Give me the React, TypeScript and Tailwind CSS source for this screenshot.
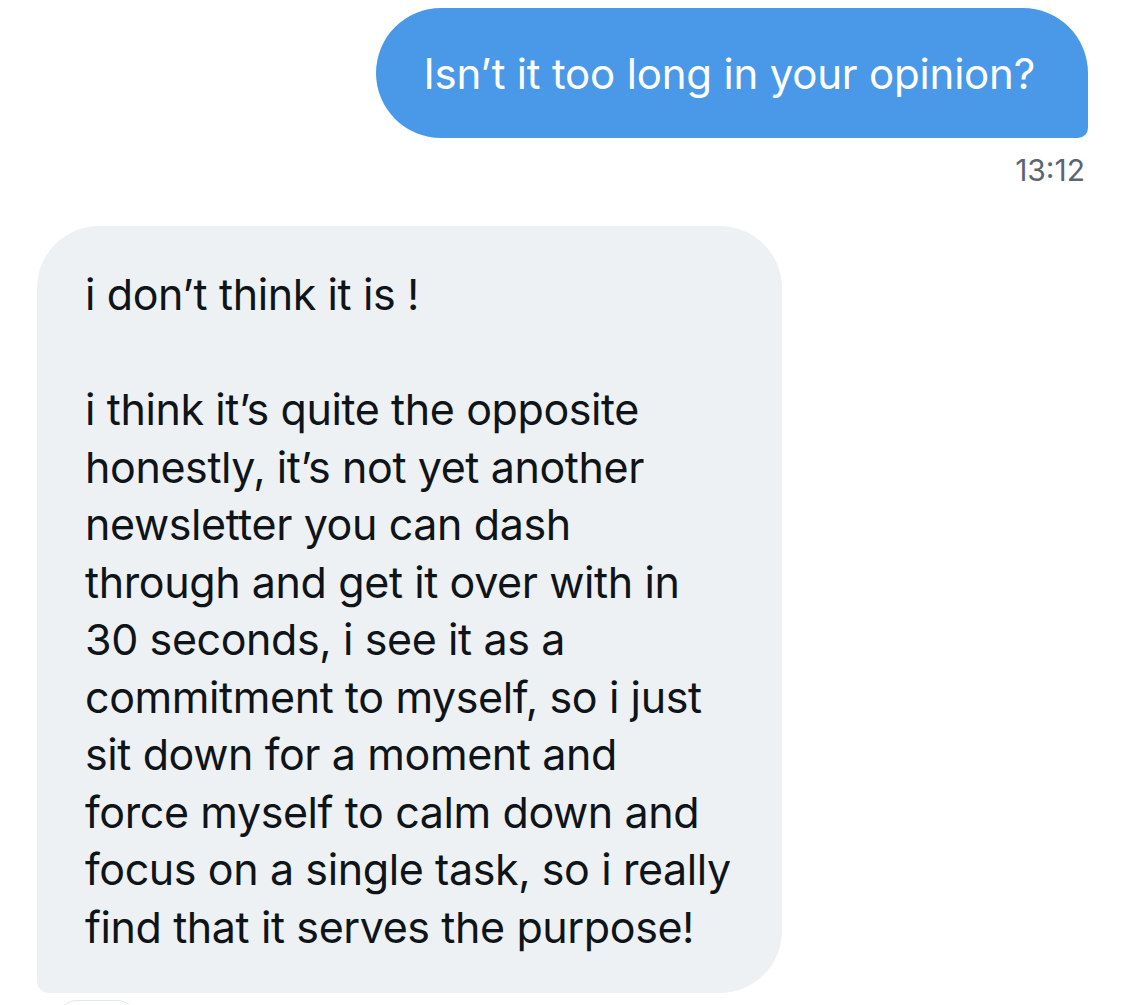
import React from 'react';

const reply = [
  'i don’t think it is !',
  '',
  'i think it’s quite the opposite',
  'honestly, it’s not yet another',
  'newsletter you can dash',
  'through and get it over with in',
  '30 seconds, i see it as a',
  'commitment to myself, so i just',
  'sit down for a moment and',
  'force myself to calm down and',
  'focus on a single task, so i really',
  'find that it serves the purpose!',
];

const App: React.FC = () => {
  return (
    <div
      className="w-[1125px] h-[1005px] overflow-hidden bg-white"
      style={{ fontFamily: 'Inter, "Noto Sans", sans-serif' }}
    >
      {/* sent message */}
      <div className="flex flex-col items-end pt-[8px] pr-[37px]">
        <div className="h-[130px] flex items-center bg-[#4a99e8] text-white text-[42px] tracking-[-0.2px] pl-[48px] pr-[53px] rounded-tl-[65px] rounded-bl-[65px] rounded-tr-[65px] rounded-br-[10px]">
          Isn’t it too long in your opinion?
        </div>
        <div className="mt-[14px] pr-[3px] text-[30px] leading-[36px] text-[#5b6670]">13:12</div>
      </div>

      {/* received message */}
      <div className="pl-[37px] mt-[38px]">
        <div className="w-[745px] bg-[#eef1f3] text-[#0f1419] text-[43px] leading-[57.5px] tracking-[-0.4px] pl-[48px] pt-[40px] pb-[37px] rounded-tl-[62px] rounded-tr-[62px] rounded-br-[62px] rounded-bl-[12px]">
          {reply.map((line, i) => (
            <div key={i} className="h-[57.5px] whitespace-nowrap">
              {line}
            </div>
          ))}
        </div>
        <div className="mt-[7px] ml-[20px] w-[80px] h-[40px] rounded-full border border-[#e3e7ea]" />
      </div>
    </div>
  );
};

export default App;
